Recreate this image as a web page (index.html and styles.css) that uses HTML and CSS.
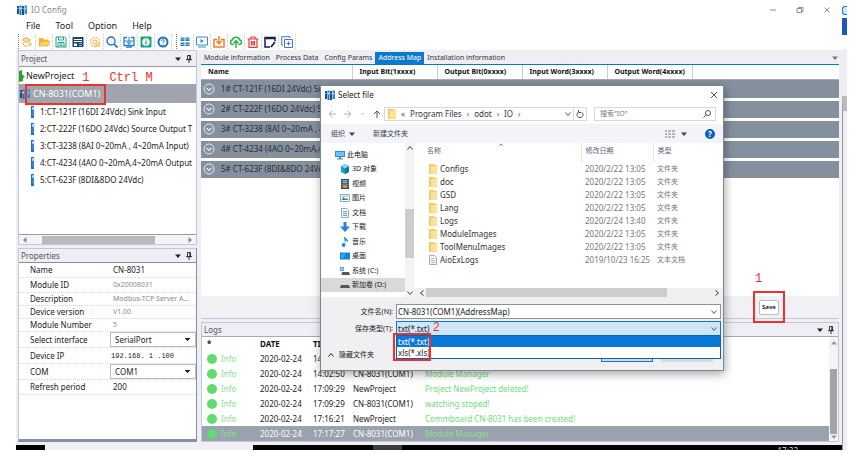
FILE: index.html
```html
<!DOCTYPE html>
<html lang="en">
<head>
    <meta charset="UTF-8">
    <meta name="viewport" content="width=device-width, initial-scale=1.0">
    <title>IO Config</title>
    <link rel="stylesheet" href="styles.css">
</head>
<body>
    <!-- shared icons -->
    <svg class="sprites" aria-hidden="true">
        <symbol id="logo" viewBox="0 0 10 10">
            <path d="M0 1h2v8H0z" fill="#1b4f86"/><path d="M2.5 0.500h2V10h-2z" fill="#1478c8"/>
            <path d="M5 1h2v9H5z" fill="#1b4f86"/><path d="M7.500 0.500H10V9H7.500z" fill="#2c8ad4"/>
            <path d="M1 3v1M3.500 2.500v2M6 3v1M8.700 2.500v2" stroke="#fff" stroke-width=".8"/>
        </symbol>
        <symbol id="module" viewBox="0 0 4 12">
            <path d="M0 0h3v12H0z" fill="#1478c8"/><path d="M1.500 1.500h2v2h-2zM1.500 5h1M1.500 7h1M1.500 9h1" fill="#cfe6f7" stroke="#cfe6f7" stroke-width=".6"/>
        </symbol>
        <symbol id="folder" viewBox="0 0 8 10">
            <path d="M0 0h5l1 1h2v9H0z" fill="#f6cd63"/><path d="M2 2h6v7.500l-6 .5z" fill="#fde39a"/>
        </symbol>
        <symbol id="expand" viewBox="0 0 12 12">
            <circle cx="6" cy="6" r="5" fill="none" stroke="#e6eaee"/><path d="M3.500 5L6 7.500 8.500 5" fill="none" stroke="#e6eaee" stroke-width="1.200"/>
        </symbol>
        <symbol id="down" viewBox="0 0 8 8"><path d="M1.500 2.500L4 5.500l2.500-3" fill="none" stroke="currentColor"/></symbol>
        <symbol id="pin" viewBox="0 0 6 8"><path d="M1.500 0.500h3v4h-3zM0 4.700h6M3 5v3M3.800 0.500v4" fill="none" stroke="currentColor" stroke-width=".9"/></symbol>
        <symbol id="tri" viewBox="0 0 6 6"><path d="M0 1.500h6L3 5z" fill="currentColor"/></symbol>
    </svg>

    <div class="screen">
        <div class="app">
            <header class="titlebar">
                <svg class="logo"><use href="#logo"/></svg>
                <span>IO Config</span>
                <div class="window-buttons">
                    <button aria-label="Minimize"><svg viewBox="0 0 8 8"><path d="M1 4h6"/></svg></button>
                    <button aria-label="Restore"><svg viewBox="0 0 8 8"><path d="M1 2.500h4.500v4H1zM2.500 2.500v-1H7v4H5.500"/></svg></button>
                    <button aria-label="Close"><svg viewBox="0 0 8 8"><path d="M1.500 1.500l5 5M6.500 1.500l-5 5"/></svg></button>
                </div>
            </header>
            <nav class="menubar">
                <button>File</button>
                <button>Tool</button>
                <button>Option</button>
                <button>Help</button>
            </nav>
            <div class="toolbar">
                <div class="tool-group">
                    <button aria-label="New"><svg viewBox="0 0 12 12"><path d="M1 4l4-2.500L9.500 4 5 6.500z" fill="#fbdca0" stroke="#f0b04c"/><path d="M2 6v2.500l3 2 2-1M7 8h4M9 6v4.500" fill="none" stroke="#f0b04c"/></svg></button>
                    <button aria-label="Open"><svg viewBox="0 0 12 12"><path d="M1 10V2h4l1 1.500h4V5" fill="#f7b52c"/><path d="M1 10l2-5h9l-2 5z" fill="#ffd36b" stroke="#f0a020" stroke-width=".7"/></svg></button>
                    <button aria-label="Save project"><svg viewBox="0 0 12 12"><path d="M1 1h8.500L11 2.500V11H1zM3.500 1v3h5V1M3 11V6.500h6V11M4.500 8h3M4.500 9.500h3" fill="none" stroke="#1ba08c"/></svg></button>
                    <button aria-label="Save as"><svg viewBox="0 0 12 12"><path d="M0.500 1h11v10H0.500z" fill="#24456b"/><path d="M2 3.500h8M2 5.500h8" stroke="#fff"/><path d="M2 7.500h3V10H2z" fill="#fff"/><path d="M7 7.500h3M7 9.500h3" stroke="#7fb8e8"/></svg></button>
                    <button aria-label="Settings"><svg viewBox="0 0 12 12"><circle cx="6" cy="6" r="4.500" fill="none" stroke="#f5c26a" stroke-width="1.500" stroke-dasharray="2 1"/><circle cx="6" cy="6" r="2" fill="none" stroke="#f5b041"/><path d="M6 8h5M6 10h5" stroke="#f5b041"/></svg></button>
                    <button aria-label="Search"><svg viewBox="0 0 12 12"><circle cx="5" cy="5" r="4" fill="none" stroke="#2468d8" stroke-width="1.300"/><path d="M8 8l3.500 3.500" stroke="#2468d8" stroke-width="1.600"/></svg></button>
                    <button aria-label="Transfer"><svg viewBox="0 0 12 12"><path d="M4 1.500H1v8h10v-8H8M3 11.200h6" fill="none" stroke="#2280c8" stroke-width="1.300"/><path d="M6 1v7M4 6l2 2.500L8 6M1 5h10" fill="none" stroke="#2280c8"/></svg></button>
                    <button aria-label="Information"><svg viewBox="0 0 12 12"><rect x=".5" y=".5" width="11" height="11" rx="1" fill="#15a878"/><circle cx="6" cy="6" r="3.800" fill="#fff"/><path d="M6 3.500v1M6 5.300v3.200" stroke="#15a878" stroke-width="1.300"/></svg></button>
                    <button aria-label="Help"><svg viewBox="0 0 12 12"><circle cx="6" cy="6" r="4.500" fill="#fff" stroke="#1a6fc4" stroke-width="2"/><path d="M4.700 5c0-2 2.800-1.700 2.600 0L6 6.300v.7M6 8v.8" fill="none" stroke="#1a6fc4"/></svg></button>
                </div>
                <div class="tool-group">
                    <button aria-label="Scan"><svg viewBox="0 0 12 12"><path d="M1.500 1.500h4v3.500h-4zM6.500 1.500h4v3.500h-4zM1.500 6.500h4V10h-4zM6.500 6.500h4V10h-4z" fill="#2a78bd"/><path d="M1 3h10M1 8.500h10" stroke="#bcdcf2" stroke-width=".7"/></svg></button>
                    <button aria-label="Run"><svg viewBox="0 0 12 12"><path d="M0.500 1h11v8H0.500zM2 11h8" fill="none" stroke="#2e90d0"/><path d="M4.500 3l3.500 2-3.500 2z" fill="#2e90d0"/></svg></button>
                    <button aria-label="Download"><svg viewBox="0 0 12 12"><path d="M4 3.500H1V11h10V3.500H8" fill="none" stroke="#f08020" stroke-width="1.500"/><path d="M6 0v7M3.500 5L6 8l2.500-3" fill="none" stroke="#f08020" stroke-width="1.400"/></svg></button>
                    <button aria-label="Upload"><svg viewBox="0 0 12 12"><path d="M3.500 8.500h-1a2.300 2.300 0 01-.3-4.500 4 4 0 017.600 0 2.300 2.300 0 01-.3 4.500h-1" fill="none" stroke="#1fb43c" stroke-width="1.500"/><path d="M6 12V5M3.500 7.500L6 4.500l2.500 3" fill="none" stroke="#1fb43c" stroke-width="1.400"/></svg></button>
                    <button aria-label="Delete"><svg viewBox="0 0 12 12"><path d="M0.500 3h11M4 3V1h4v2M2 3v8.300h8V3M4.500 5v4.500M6 5v4.500M7.500 5v4.500" fill="none" stroke="#e03c3c" stroke-width="1.200"/></svg></button>
                    <button aria-label="Edit"><svg viewBox="0 0 12 12"><path d="M6 11H1V1.500h10V5" fill="none" stroke="#17195c" stroke-width="1.500"/><path d="M1 2.500h10" stroke="#17195c" stroke-width="1.500"/><path d="M7 11l4-5" stroke="#17195c" stroke-width="1.800"/></svg></button>
                    <button aria-label="Copy"><svg viewBox="0 0 12 12"><path d="M3.500 3.500h8v8h-8zM2 9H.7V.7H9V2M7.500 5.500v4M5.500 7.500h4" fill="none" stroke="#3e70e0"/></svg></button>
                </div>
            </div>

            <main class="workspace">
                <aside class="side">
                    <section class="panel project">
                        <div class="panel-head"><h2>Project</h2><svg class="tri"><use href="#tri"/></svg><svg class="pin"><use href="#pin"/></svg></div>
                        <ul class="tree">
                            <li class="root"><svg class="plug" viewBox="0 0 6 12"><path d="M0 1l3-1v4l3 3-2 1v3l-4 1z" fill="#2ca02c"/></svg>NewProject<span class="note note-keys"><b>1</b><b>Ctrl M</b></span></li>
                            <li class="device"><svg class="logo"><use href="#logo"/></svg>CN-8031(COM1)<span class="mark mark-device"></span></li>
                            <li><svg class="module"><use href="#module"/></svg>1:CT-121F (16DI 24Vdc) Sink Input</li>
                            <li><svg class="module"><use href="#module"/></svg>2:CT-222F (16DO 24Vdc) Source Output T</li>
                            <li><svg class="module"><use href="#module"/></svg>3:CT-3238 (8AI 0~20mA , 4~20mA Input)</li>
                            <li><svg class="module"><use href="#module"/></svg>4:CT-4234 (4AO 0~20mA,4~20mA Output</li>
                            <li><svg class="module"><use href="#module"/></svg>5:CT-623F (8DI&amp;8DO 24Vdc)</li>
                        </ul>
                        <div class="hscroll"><svg class="tri left"><use href="#tri"/></svg><i></i><svg class="tri right"><use href="#tri"/></svg></div>
                    </section>

                    <section class="panel properties">
                        <div class="panel-head"><h2>Properties</h2><svg class="tri"><use href="#tri"/></svg><svg class="pin"><use href="#pin"/></svg></div>
                        <form class="props">
                            <div class="prop"><label for="name">Name</label><input id="name" value="CN-8031"></div>
                            <div class="prop"><label for="module-id">Module ID</label><input id="module-id" value="0x20008031" readonly></div>
                            <div class="prop short"><label for="desc">Description</label><input id="desc" value="Modbus-TCP Server A..." readonly></div>
                            <div class="prop short"><label for="version">Device version</label><input id="version" value="V1.00" readonly></div>
                            <div class="prop short"><label for="number">Module Number</label><input id="number" value="5" readonly></div>
                            <div class="prop tall"><label for="interface">Select interface</label><select id="interface"><option>SerialPort</option></select></div>
                            <div class="prop tall"><label for="ip">Device IP</label><input id="ip" class="ip" value="192.168. 1 .100"></div>
                            <div class="prop tall"><label for="com">COM</label><select id="com"><option>COM1</option></select></div>
                            <div class="prop"><label for="refresh">Refresh period</label><input id="refresh" value="200"></div>
                        </form>
                    </section>
                </aside>

                <div class="content">
                    <section class="document">
                        <div class="tabs">
                            <button>Module information</button>
                            <button>Process Data</button>
                            <button>Config Params</button>
                            <button class="active">Address Map</button>
                            <button>Installation information</button>
                            <svg class="tri"><use href="#tri"/></svg>
                        </div>
                        <div class="map">
                            <table>
                                <thead>
                                    <tr><th class="col-name">Name</th><th>Input Bit(1xxxx)</th><th>Output Bit(0xxxx)</th><th>Input Word(3xxxx)</th><th>Output Word(4xxxx)</th><th class="rest"></th></tr>
                                </thead>
                                <tbody>
                                    <tr><td colspan="6"><button><svg><use href="#expand"/></svg>1# CT-121F (16DI 24Vdc) Sink Input</button></td></tr>
                                    <tr><td colspan="6"><button><svg><use href="#expand"/></svg>2# CT-222F (16DO 24Vdc) Source Output</button></td></tr>
                                    <tr><td colspan="6"><button><svg><use href="#expand"/></svg>3# CT-3238 (8AI 0~20mA , 4~20mA Input)</button></td></tr>
                                    <tr><td colspan="6"><button><svg><use href="#expand"/></svg>4# CT-4234 (4AO 0~20mA,4~20mA Output)</button></td></tr>
                                    <tr><td colspan="6"><button><svg><use href="#expand"/></svg>5# CT-623F (8DI&amp;8DO 24Vdc)</button></td></tr>
                                </tbody>
                            </table>
                        </div>
                        <div class="map-footer">
                            <div class="save-wrap">
                                <button class="save">Save</button>
                                <span class="mark mark-save"></span>
                                <b class="note note-save">1</b>
                            </div>
                        </div>
                    </section>

                    <section class="panel logs">
                        <div class="panel-head"><h2>Logs</h2><svg class="tri"><use href="#tri"/></svg><svg class="pin"><use href="#pin"/></svg></div>
                        <div class="log-body">
                            <table>
                                <thead>
                                    <tr><th class="level">*</th><th class="date">DATE</th><th class="time">TIME</th><th class="source"></th><th></th></tr>
                                </thead>
                                <tbody>
                                    <tr><td><i class="dot"></i>Info</td><td>2020-02-24</td><td>14:02:50</td><td></td><td></td></tr>
                                    <tr><td><i class="dot"></i>Info</td><td>2020-02-24</td><td>14:02:50</td><td>CN-8031(COM1)</td><td>Module Manager</td></tr>
                                    <tr><td><i class="dot"></i>Info</td><td>2020-02-24</td><td>17:09:29</td><td>NewProject</td><td>Project NewProject deleted!</td></tr>
                                    <tr><td><i class="dot"></i>Info</td><td>2020-02-24</td><td>17:09:29</td><td>CN-8031(COM1)</td><td>watching stoped!</td></tr>
                                    <tr><td><i class="dot"></i>Info</td><td>2020-02-24</td><td>17:16:21</td><td>NewProject</td><td>Commboard CN-8031 has been created!</td></tr>
                                    <tr class="selected"><td><i class="dot"></i>Info</td><td>2020-02-24</td><td>17:17:27</td><td>CN-8031(COM1)</td><td>Module Manager</td></tr>
                                </tbody>
                            </table>
                            <div class="vscroll"><svg class="tri up"><use href="#tri"/></svg><i></i><svg class="tri"><use href="#tri"/></svg></div>
                        </div>
                    </section>
                </div>
            </main>
            <footer class="taskbar"><i class="start"></i><i class="search"></i><i class="task"></i><i class="active-task"></i><span>17:33</span></footer>

            <!-- save dialog -->
            <div class="dialog" role="dialog" aria-label="Select file">
                <div class="dialog-title"><svg class="logo"><use href="#logo"/></svg><span>Select file</span>
                    <button aria-label="Close"><svg viewBox="0 0 8 8"><path d="M1 1l6 6M7 1L1 7"/></svg></button>
                </div>
                <div class="dialog-nav">
                    <div class="arrows">
                        <button aria-label="Back"><svg viewBox="0 0 8 8"><path d="M8 4H1M4 1L1 4l3 3"/></svg></button>
                        <button aria-label="Forward"><svg viewBox="0 0 8 8"><path d="M0 4h7M4 1l3 3-3 3"/></svg></button>
                        <button class="recent" aria-label="Recent"><svg><use href="#down"/></svg></button>
                        <button class="parent" aria-label="Up"><svg viewBox="0 0 8 8"><path d="M4 8V1M1 4l3-3 3 3"/></svg></button>
                    </div>
                    <div class="crumbs"><svg class="folder"><use href="#folder"/></svg><span>«</span><a href="#">Program Files</a><span>›</span><a href="#">odot</a><span>›</span><a href="#">IO</a><span>›</span>
                        <svg class="chev"><use href="#down"/></svg>
                        <button aria-label="Refresh"><svg viewBox="0 0 8 8"><path d="M2.500 2A3 3 0 105.500 2M2.500 0v2.500H5"/></svg></button>
                    </div>
                    <div class="search-box"><input aria-label="Search" placeholder='搜索"IO"'><svg viewBox="0 0 8 8"><circle cx="5" cy="3" r="2.500"/><path d="M3.200 4.800L0.500 7.500"/></svg></div>
                </div>
                <div class="dialog-tools">
                    <button>组织 <svg class="tri"><use href="#tri"/></svg></button>
                    <button>新建文件夹</button>
                    <button class="view" aria-label="View"><svg class="list-icon" viewBox="0 0 10 8"><path d="M0 1h2M0 4h2M0 7h2M3 1h3M3 4h3M3 7h3M7 1h3M7 4h3M7 7h3" stroke="#777"/></svg><svg class="tri"><use href="#tri"/></svg></button>
                    <button class="help" aria-label="Help">?</button>
                </div>
                <div class="browser">
                    <ul class="places">
                        <li class="pc"><svg viewBox="0 0 10 10"><path d="M0 1h10v6H0z" fill="#2a8cd8"/><path d="M1 2h8v4H1z" fill="#6cc4f5"/><path d="M4 7h2v1.500H4zM2 8.500h6v1H2z" fill="#5a88a8"/></svg>此电脑</li>
                        <li><svg viewBox="0 0 10 10"><path d="M1 2l4-2 4 2v6L5 10 1 8z" fill="#16a3bd"/><path d="M5 4.500L9 2v6L5 10z" fill="#0a7f9c"/><path d="M1 2l4-2 4 2-4 2.500z" fill="#7fdcea"/></svg>3D 对象</li>
                        <li><svg viewBox="0 0 10 10"><path d="M1 0h8v10H1z" fill="#3c4650"/><path d="M3 1h4v3.500H3z" fill="#5fa4d8"/><path d="M3 5.500h4V9H3z" fill="#c8924a"/><path d="M2 1v8M8 1v8" stroke="#ddd" stroke-width=".8" stroke-dasharray="1 1"/></svg>视频</li>
                        <li><svg viewBox="0 0 10 10"><path d="M.5 1.500h9v7h-9z" fill="#fff" stroke="#9aa"/><path d="M1.500 7l2-3 2 2 1.500-1 1.500 2z" fill="#2f8a9f"/><path d="M1.500 2.500h7v1.500h-7z" fill="#9fd3f4"/></svg>图片</li>
                        <li><svg viewBox="0 0 10 10"><path d="M1.500.5h5L8.500 2.500v7h-7z" fill="#fff" stroke="#8ab"/><path d="M3 3.500h4M3 5.500h4M3 7.500h4" stroke="#5aa0cc"/></svg>文档</li>
                        <li><svg viewBox="0 0 10 10"><path d="M3.500 0h3v4.500H10L5 10 0 4.500h3.500z" fill="#2287dc"/></svg>下载</li>
                        <li><svg viewBox="0 0 10 10"><path d="M4 0h1.300c.3 2 3.200 2 3 5.500C7.500 4 6.300 3.800 5.300 3.700V8" fill="#1e8ae0"/><circle cx="3.600" cy="8" r="1.900" fill="#1e8ae0"/></svg>音乐</li>
                        <li><svg viewBox="0 0 10 10"><path d="M0 1.500h10v7H0z" fill="#0f83d8"/><path d="M1 2.500h5L3 7.500H1z" fill="#36a4ef"/></svg>桌面</li>
                        <li><svg viewBox="0 0 10 10"><path d="M0 1h1.700v1.700H0zM2.200 1h1.700v1.700H2.200zM0 3.200h1.700v1.700H0zM2.200 3.200h1.700v1.700H2.200z" fill="#1ea0e6"/><path d="M2 6h7l1 3H1.500z" fill="#555"/></svg>系统 (C:)</li>
                        <li class="selected"><svg viewBox="0 0 10 10"><path d="M1 5h8l1 3H0z" fill="#555"/></svg>新加卷 (D:)</li>
                    </ul>
                    <div class="places-scroll"><svg class="flip"><use href="#down"/></svg><i></i><svg><use href="#down"/></svg></div>
                    <div class="files">
                        <table>
                            <thead><tr><th class="f-name">名称<svg class="flip sort"><use href="#down"/></svg></th><th class="f-date">修改日期</th><th>类型</th></tr></thead>
                            <tbody>
                                <tr><td><svg><use href="#folder"/></svg>Configs</td><td>2020/2/22 13:05</td><td>文件夹</td></tr>
                                <tr><td><svg><use href="#folder"/></svg>doc</td><td>2020/2/22 13:05</td><td>文件夹</td></tr>
                                <tr><td><svg><use href="#folder"/></svg>GSD</td><td>2020/2/22 13:05</td><td>文件夹</td></tr>
                                <tr><td><svg><use href="#folder"/></svg>Lang</td><td>2020/2/22 13:05</td><td>文件夹</td></tr>
                                <tr><td><svg><use href="#folder"/></svg>Logs</td><td>2020/2/24 13:40</td><td>文件夹</td></tr>
                                <tr><td><svg><use href="#folder"/></svg>ModuleImages</td><td>2020/2/22 13:05</td><td>文件夹</td></tr>
                                <tr><td><svg><use href="#folder"/></svg>ToolMenuImages</td><td>2020/2/22 13:05</td><td>文件夹</td></tr>
                                <tr><td><svg viewBox="0 0 8 10"><path d="M.5.5h5l2 2v7h-7z" fill="#f4f4f4" stroke="#aaa"/><path d="M2 3.500h4M2 5.500h4M2 7.500h4" stroke="#aaa" stroke-width=".7"/></svg>AioExLogs</td><td>2019/10/23 16:25</td><td>文本文档</td></tr>
                            </tbody>
                        </table>
                        <div class="files-scroll"><svg class="turn-left"><use href="#down"/></svg><i></i><svg class="turn-right"><use href="#down"/></svg></div>
                    </div>
                </div>
                <div class="dialog-form">
                    <label for="filename">文件名(N):</label>
                    <div class="field"><input id="filename" value="CN-8031(COM1)(AddressMap)"><svg><use href="#down"/></svg></div>
                    <label for="filetype">保存类型(T):</label>
                    <div class="field type">
                        <select id="filetype"><option>txt(*.txt)</option><option>xls(*.xls)</option></select><svg><use href="#down"/></svg>
                        <ul class="options">
                            <li class="active">txt(*.txt)</li>
                            <li>xls(*.xls)</li>
                        </ul>
                        <span class="mark mark-type"></span>
                        <b class="note note-type">2</b>
                    </div>
                </div>
                <div class="dialog-actions">
                    <button class="hide-folders"><svg class="flip"><use href="#down"/></svg>隐藏文件夹</button>
                    <button class="action primary" aria-label="Save"></button>
                    <button class="action" aria-label="Cancel"></button>
                </div>
            </div>
        </div>
        <div class="edge"><i class="edge-icon"></i><i class="edge-block"></i><i class="edge-scroll"></i></div>
    </div>
</body>
</html>
```
FILE: styles.css
```css
* {
    box-sizing: border-box;
}
body {
    margin: 0;
    background: #fff;
    color: #222;
    font-family: "Noto Sans", "Noto Sans CJK SC", sans-serif;
    font-size: 8px;
    line-height: 12px;
}
button, input, select {
    font: inherit;
    color: inherit;
    margin: 0;
    padding: 0;
    border: 0;
    background: none;
    min-width: 0;
}
ul {
    list-style: none;
    margin: 0;
    padding: 0;
}
h2 {
    margin: 0;
    font-size: 8px;
    font-weight: normal;
}
table {
    border-collapse: collapse;
    table-layout: fixed;
    width: 100%;
}
th, td {
    padding: 0;
    text-align: left;
    white-space: nowrap;
    overflow: hidden;
}
svg {
    display: block;
    flex: none;
}
i {
    display: block;
}
.sprites {
    position: absolute;
    width: 0;
    height: 0;
}
.logo {
    width: 10px;
    height: 10px;
}
.tri {
    width: 6px;
    height: 6px;
}
.pin {
    width: 6px;
    height: 8px;
}
.flip {
    transform: rotate(180deg);
}
.screen {
    display: flex;
    margin: 0 12px 0 16px;
    min-height: calc(100vh - 8px);
}
.app {
    position: relative;
    flex: 1;
    min-width: 0;
    display: flex;
    flex-direction: column;
}

/* title, menu, toolbar */
.titlebar {
    display: flex;
    align-items: center;
    gap: 4px;
    height: 19px;
    padding-left: 1px;
    color: #888;
}
.window-buttons {
    display: flex;
    gap: 19px;
    margin-left: auto;
    padding-right: 11px;
}
.window-buttons svg {
    width: 8px;
    height: 8px;
    fill: none;
    stroke: #777;
    stroke-width: .8;
}
.menubar {
    display: flex;
    gap: 15px;
    height: 14px;
    padding-left: 10px;
    font-size: 9px;
}
.toolbar {
    display: flex;
    gap: 4px;
    height: 17px;
    padding: 1px 2px;
}
.tool-group {
    display: flex;
    border-left: 1px dotted #777;
}
.tool-group button {
    width: 17px;
    padding: 0 2px;
    border-right: 1px dotted #b5d8b5;
}
.tool-group svg {
    width: 12px;
    height: 12px;
}

/* workspace */
.workspace {
    flex: 1;
    display: grid;
    grid-template-columns: 179px minmax(0, 1fr);
    gap: 4px;
    padding: 0 3px 3px 2px;
    background: #eeeef4;
}
.side, .content {
    display: flex;
    flex-direction: column;
    gap: 3px;
    min-width: 0;
}
.panel {
    border: 1px solid #c3c7d6;
    background: #fff;
}
.panel-head {
    display: flex;
    align-items: center;
    gap: 5px;
    height: 13px;
    padding: 0 4px 0 2px;
    background: #eeeef4;
    color: #222;
}
.panel-head h2 {
    flex: 1;
    color: #555;
}
.project {
    display: flex;
    flex-direction: column;
    height: 195px;
}
.project .panel-head {
    height: 15px;
}
.tree {
    flex: 1;
    border-top: 1px solid #99a;
}
.tree li {
    position: relative;
    display: flex;
    align-items: center;
    gap: 5px;
    height: 17px;
    padding-left: 12px;
    white-space: nowrap;
}
.tree .root {
    gap: 1px;
    padding-left: 0;
    font-size: 9px;
}
.tree .device {
    gap: 3px;
    height: 19px;
    padding-left: 1px;
    background: #a0a4ae;
    color: #fff;
    font-size: 9px;
}
.plug {
    width: 6px;
    height: 12px;
}
.module {
    width: 4px;
    height: 12px;
}
.hscroll {
    display: flex;
    align-items: center;
    height: 10px;
    padding: 0 3px;
    border-top: 1px solid #99a;
    background: #f4f4f8;
    color: #888;
}
.hscroll i {
    width: 113px;
    height: 8px;
    margin: 0 auto 0 14px;
    background: #b8b8bd;
}
.left {
    transform: rotate(90deg);
}
.right {
    transform: rotate(-90deg);
}
.properties {
    flex: 1;
    display: flex;
    flex-direction: column;
    border-bottom: 3px solid #8390a0;
    border-right-color: #8390a0;
}
.props {
    flex: 1;
    border-top: 1px solid #8390a0;
}
.prop {
    display: grid;
    grid-template-columns: 80px minmax(0, 1fr);
    height: 15px;
    padding-left: 11px;
    border-bottom: 1px dotted #d5d5da;
    align-items: center;
}
.prop.short {
    height: 13px;
}
.prop.tall {
    height: 16px;
}
.prop input {
    width: 100%;
    padding-left: 3px;
}
.prop input:read-only {
    font-size: 7px;
    color: #8a8a8a;
}
.prop select {
    height: 15px;
    padding: 0 4px;
    appearance: none;
    border: 1px solid #b9beb9;
    background: conic-gradient(from 315deg at 50% 100%, #222 90deg, transparent 0) no-repeat right 5px center / 5px 3px;
}
.prop .ip {
    padding-left: 1px;
    font-family: "Liberation Mono", monospace;
    font-size: 7px;
}

/* address map */
.document {
    flex: 1;
    display: flex;
    flex-direction: column;
    border-bottom: 1px solid #c3c7d6;
    background: #fff;
}
.tabs {
    display: flex;
    align-items: flex-end;
    height: 15px;
    background: #eeeef4;
    border-bottom: 1px solid #0a78c8;
    font-size: 7px;
}
.tabs button {
    height: 12px;
    padding: 0 3px;
    color: #333;
    white-space: nowrap;
}
.tabs .active {
    background: #0a7acc;
    color: #fff;
}
.tabs .tri {
    margin: 0 1px 3px auto;
    color: #777;
}
.map {
    flex: 1;
}
.map th {
    height: 14px;
    padding-left: 7px;
    border-right: 1px solid #ccc;
    border-bottom: 1px solid #aaa;
    color: #111;
    font-size: 7px;
}
.map th:nth-child(n+2) {
    width: 85px;
}
.map .col-name {
    width: 151px;
}
.map .rest {
    width: auto !important;
    border-right: 0;
}
.map td {
    height: 20px;
    border-bottom: 3px solid #fff;
    background: #84909d;
}
.map td button {
    display: flex;
    align-items: center;
    gap: 6px;
    width: 100%;
    height: 17px;
    padding-left: 2px;
    color: #292d33;
}
.map td svg {
    width: 12px;
    height: 12px;
}
.map-footer {
    display: flex;
    justify-content: flex-end;
    align-items: center;
    height: 22px;
    padding-right: 60px;
    background: #f1f1f5;
}
.save-wrap {
    position: relative;
}
.save {
    display: block;
    width: 20px;
    height: 15px;
    border: 1px solid #bbb;
    border-radius: 2px;
    background: #fff;
    font-size: 6px;
    font-weight: bold;
}

/* logs */
.log-body {
    display: flex;
    border-top: 1px solid #aaa;
}
.log-body table {
    flex: 1;
    min-width: 0;
}
.log-body th {
    height: 14px;
    color: #111;
}
.log-body .level {
    width: 58px;
    padding-left: 5px;
}
.log-body .date {
    width: 53px;
}
.log-body .time {
    width: 40px;
}
.log-body .source {
    width: 72px;
}
.log-body td {
    height: 15px;
}
.log-body td:first-child {
    padding-left: 5px;
    color: #86e08e;
}
.log-body td:last-child {
    color: #6fdc78;
}
.log-body .selected td {
    background: #9aa2ad;
    color: #fff;
}
.log-body .selected td:first-child, .log-body .selected td:last-child {
    color: #86e08e;
}
.dot {
    display: inline-block;
    width: 10px;
    height: 10px;
    margin-right: 4px;
    border-radius: 50%;
    background: #5fdc6b;
    vertical-align: middle;
}
.vscroll {
    display: flex;
    flex-direction: column;
    align-items: center;
    width: 9px;
    padding: 3px 0 1px;
    background: #f4f4f8;
    color: #999;
}
.vscroll i {
    width: 7px;
    height: 65px;
    margin-top: auto;
    background: #a3a3a8;
}
.up {
    transform: rotate(180deg);
}

/* taskbar and window edge */
.taskbar {
    display: flex;
    height: 5px;
    overflow: hidden;
    background: #000;
    color: #ddd;
}
.search {
    width: 208px;
    background: #f1f1f5;
}
.start {
    width: 29px;
}
.task {
    width: 120px;
}
.active-task {
    width: 29px;
    background: #3c3c3c;
}
.taskbar span {
    margin-left: auto;
    padding-right: 44px;
}
.edge {
    display: flex;
    flex-direction: column;
    width: 5px;
    background: linear-gradient(#fff 49px, #eeeef4 49px);
}
.edge-icon {
    height: 9px;
    margin-top: 6px;
    border: 1px solid #2a78d0;
    border-right: 0;
    border-radius: 3px 0 0 3px;
    background: #cfe4fa;
}
.edge-block {
    height: 17px;
    margin-top: 3px;
    background: #1d59b8;
}
.edge-scroll {
    flex: 1;
    margin-top: 61px;
    border-left: 1px solid #999;
    border-top: 15px solid #bbb;
}

/* dialog */
.dialog {
    position: absolute;
    left: 304px;
    top: 85px;
    width: 404px;
    border: 1px solid #7d8590;
    background: #fff;
    box-shadow: 1px 3px 9px rgba(0, 0, 0, .35);
}
.dialog-title {
    display: flex;
    align-items: center;
    gap: 3px;
    height: 18px;
    padding: 0 5px 0 4px;
}
.dialog-title button {
    margin-left: auto;
}
.dialog-title button svg, .arrows svg, .crumbs button svg, .search-box svg {
    width: 8px;
    height: 8px;
    fill: none;
    stroke: #444;
    stroke-width: .9;
}
.dialog-nav {
    display: flex;
    align-items: center;
    height: 20px;
    padding: 0 7px;
}
.arrows {
    display: flex;
    gap: 8px;
    width: 56px;
}
.arrows button svg {
    stroke: #aaa;
}
.arrows .recent svg {
    width: 5px;
    color: #aaa;
}
.arrows .parent svg {
    stroke: #444;
}
.crumbs {
    display: flex;
    align-items: center;
    gap: 5px;
    flex: 1;
    height: 14px;
    margin-right: 7px;
    padding-left: 3px;
    border: 1px solid #d9d9d9;
}
.crumbs a {
    color: #333;
    text-decoration: none;
}
.crumbs span {
    color: #555;
}
.folder {
    width: 8px;
    height: 10px;
}
.chev {
    width: 8px;
    height: 8px;
    margin-left: auto;
    color: #555;
}
.crumbs button {
    height: 12px;
    margin-left: -4px;
    padding: 0 2px;
    border-left: 1px solid #d9d9d9;
}
.search-box {
    display: flex;
    align-items: center;
    width: 122px;
    height: 14px;
    padding: 0 4px 0 5px;
    border: 1px solid #d9d9d9;
    font-size: 7px;
}
.search-box input {
    flex: 1;
}
.search-box input::placeholder {
    color: #777;
}
.dialog-tools {
    display: flex;
    align-items: center;
    gap: 18px;
    height: 19px;
    padding: 0 8px 0 10px;
    background: #f3f3f8;
    color: #345;
    font-size: 7px;
}
.dialog-tools button {
    display: flex;
    align-items: center;
    gap: 4px;
}
.dialog-tools .view {
    margin-left: auto;
    gap: 6px;
}
.list-icon {
    width: 10px;
    height: 8px;
}
.dialog-tools .help {
    justify-content: center;
    width: 10px;
    height: 10px;
    border-radius: 50%;
    background: #0a62c0;
    color: #fff;
    font-size: 8px;
    font-weight: bold;
}
.browser {
    display: grid;
    grid-template-columns: 84px 9px minmax(0, 1fr);
    height: 154px;
}
.places {
    padding-top: 4px;
    font-size: 7px;
}
.places li {
    display: flex;
    align-items: center;
    gap: 2px;
    height: 15px;
    padding-left: 19px;
}
.places .pc {
    padding-left: 14px;
}
.places li:nth-child(even) {
    height: 14px;
}
.places .selected {
    background: #d9d9d9;
}
.places svg {
    width: 10px;
    height: 10px;
}
.places-scroll {
    display: flex;
    flex-direction: column;
    align-items: center;
    padding-top: 1px;
    background: #f3f3f5;
    color: #444;
}
.places-scroll svg {
    width: 8px;
    height: 8px;
}
.places-scroll i {
    width: 9px;
    height: 49px;
    margin: auto 0 31px;
    background: #cdcdcd;
}
.files {
    display: flex;
    flex-direction: column;
    justify-content: space-between;
    color: #777;
    font-size: 7px;
}
.files th {
    height: 19px;
    padding: 0 0 4px 4px;
    border-left: 1px solid #e5e5e5;
    color: #567;
    font-weight: normal;
}
.files .f-name {
    position: relative;
    width: 167px;
    padding-left: 13px;
    border-left: 0;
}
.files .f-date {
    width: 72px;
}
.sort {
    position: absolute;
    left: 83px;
    top: -1px;
    width: 8px;
    height: 6px;
}
.files td {
    height: 13px;
    padding-left: 4px;
}
.files td:nth-child(1), .files td:nth-child(2) {
    font-size: 8px;
}
.files td:nth-child(1) {
    padding-left: 15px;
    color: #333;
}
.files td svg {
    display: inline-block;
    width: 8px;
    height: 10px;
    margin-right: 3px;
    vertical-align: middle;
}
.files-scroll {
    display: flex;
    align-items: center;
    height: 9px;
    padding: 0 2px 0 4px;
    background: #f0f0f2;
    color: #333;
}
.files-scroll svg {
    width: 8px;
    height: 8px;
}
.files-scroll i {
    width: 241px;
    height: 9px;
    margin-right: auto;
    background: #cdcdcd;
}
.turn-left {
    transform: rotate(90deg);
}
.turn-right {
    transform: rotate(-90deg);
}
.dialog-form {
    display: grid;
    grid-template-columns: 72px minmax(0, 1fr);
    gap: 2px 3px;
    align-items: center;
    padding: 7px 2px 0 0;
    background: #f0f0f2;
}
.dialog-form label {
    font-size: 7px;
    text-align: right;
}
.field {
    position: relative;
    display: flex;
    align-items: center;
    height: 15px;
    padding: 0 2px 0 1px;
    border: 1px solid #8f948f;
    background: #fff;
}
.field input, .field select {
    flex: 1;
    appearance: none;
}
.field svg {
    width: 8px;
    height: 8px;
    color: #555;
}
.field.type {
    border-color: #0a78d0;
    background: #cfe5f8;
}
.options {
    position: absolute;
    z-index: 1;
    left: -1px;
    right: -1px;
    top: 13px;
    border: 1px solid #0a62b0;
    background: #fff;
}
.options li {
    height: 11px;
    padding-left: 1px;
    line-height: 11px;
}
.options .active {
    background: #0a78d7;
    color: #fff;
}
.dialog-actions {
    display: flex;
    gap: 8px;
    height: 34px;
    padding: 11px 10px 8px 6px;
    background: #f0f0f2;
}
.hide-folders {
    display: flex;
    align-items: center;
    gap: 4px;
    margin-right: auto;
    font-size: 7px;
}
.hide-folders svg {
    width: 8px;
    height: 8px;
}
.action {
    width: 52px;
    background: #d8d8d8;
}
.action.primary {
    border: 1px solid #0a78d0;
}

/* red callouts */
.mark {
    position: absolute;
    z-index: 2;
    border: 2px solid #f0302c;
    pointer-events: none;
}
.mark-device {
    left: 6px;
    top: 0;
    width: 81px;
    height: 21px;
}
.mark-save {
    left: -6px;
    top: -9px;
    width: 32px;
    height: 32px;
}
.mark-type {
    left: -4px;
    top: 11px;
    width: 38px;
    height: 28px;
}
.note {
    color: #f0302c;
    font-family: "Liberation Mono", monospace;
    font-size: 12px;
    font-weight: normal;
}
.note b {
    font-weight: normal;
}
.note-keys {
    display: flex;
    gap: 20px;
    margin-left: 7px;
    padding-top: 4px;
}
.note-save {
    position: absolute;
    left: -4px;
    top: -27px;
}
.note-type {
    position: absolute;
    z-index: 2;
    left: 36px;
    top: -1px;
    font-family: "Liberation Sans", sans-serif;
}
```
